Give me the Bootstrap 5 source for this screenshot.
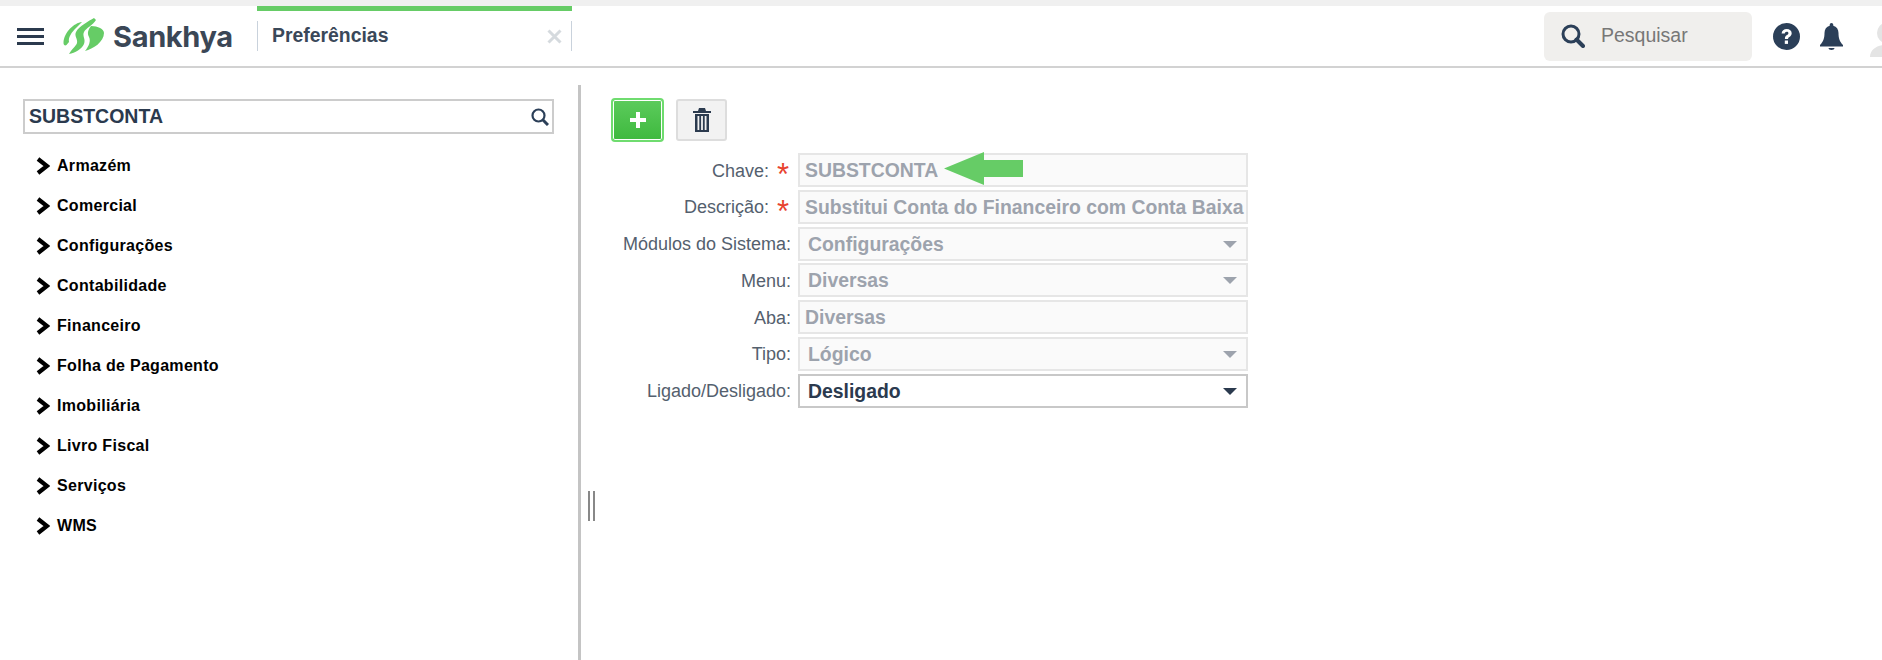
<!DOCTYPE html>
<html lang="pt-BR">
<head>
<meta charset="utf-8">
<title>Preferências</title>
<link href="https://cdn.jsdelivr.net/npm/bootstrap@5.3.0/dist/css/bootstrap.min.css" rel="stylesheet">
<style>
html,body{height:660px;overflow:hidden;background:#fff}
body{font-family:"Liberation Sans",Arial,sans-serif;color:#2b3a4e}
.top-strip{height:6px;background:#f0f0f0}
.app-head{height:62px;border-bottom:2px solid #d2d2d2;background:#fff}
.burger{width:27px;margin-left:17px;margin-right:19px}
.burger i{display:block;height:3px;background:#2b3a4e;margin-bottom:4px}
.burger i:last-child{margin-bottom:0}
.logo-mark{width:42px;height:36px;flex:none}
.logo-word{font-family:"Inter","Liberation Sans",sans-serif;font-size:29px;font-weight:700;color:#3b4756;letter-spacing:-.35px;margin-left:8px;width:144px;line-height:1;flex:none}
.tab-slot{width:315px;height:60px;border-top:5px solid #66cc66;padding:10px 0}
.tab-inner{height:30px;border-left:1px solid #c9d2dc;border-right:1px solid #c9d2dc;padding:0 9px 0 14px}
.tab-title{font-size:19.4px;font-weight:700;color:#3a4859}
.search-top{width:208px;height:49px;background:#f0efed;border-radius:6px;padding-left:17px;font-size:19.5px;color:#777}
.search-top span{margin-left:16px}
.avatar-box{width:12px;height:34px;overflow:hidden;margin-left:27px;align-self:flex-end;margin-bottom:9px}
.work{height:592px}
.side{width:578px;padding:31px 24px 0 23px;flex:none}
.tree-search{height:35px;border:2px solid #ccc;padding:0 3px 0 4px;font-size:19.5px;font-weight:700;margin-bottom:11px;line-height:33px}
.tree-row{height:40px;padding:1px 0 0 12px;color:#000;font-size:16px;font-weight:700;letter-spacing:.3px}
.tree-row svg{margin-right:7px;flex:none}
.divider{width:3px;background:#c4c4c4;margin-top:17px;flex:none}
.pane{padding:30px 0 0 30px;position:relative;flex:1}
.grip{width:7px;height:30px;border-left:2px solid #888;border-right:2px solid #888;position:absolute;left:7px;top:423px}
.btn-new{width:53px;height:44px;padding:0;border:2px solid #6fdc6f;border-radius:4px;background:linear-gradient(#5ccb5c,#3eb93e);box-shadow:inset 0 0 0 1px #fff}
.btn-new:hover{background:#3eb93e}
.btn-del{width:51px;height:42px;padding:0;border:2px solid #ddd;border-radius:3px;background:#f2f2f2;margin-left:12px}
.btn-del:hover{background:#f2f2f2;border-color:#ddd}
.tool-row{margin-bottom:11px}
.frm-row{height:34px;margin-bottom:2.8px}
.frm-lbl{width:187px;flex:none;text-align:right;font-size:18px;color:#54606e;padding:2px 7px 0 0}
.req{color:#e8432e;font-size:31px;font-weight:400;line-height:16px;width:22px;text-align:center;flex:none;margin-right:4px;padding-top:10px}
.frm-lbl.has-req{width:158px;padding-right:0;margin-right:3px}
.fld{width:450px;height:34px;border:2px solid #e6e6e6;background:#fafafa;color:#9da3ad;font-weight:700;font-size:19.4px;padding:1px 4px 0 5px;white-space:nowrap;overflow:hidden}
.fld.sel{padding:1px 9px 0 8px}
.fld.live{background:#fff;border-color:#c8c8c8;color:#2b3a4e}
.caret-d{width:0;height:0;border-left:7px solid transparent;border-right:7px solid transparent;border-top:7px solid #9da3ad;flex:none}
.fld.live .caret-d{border-top-color:#2b3a4e}
.pointer{position:absolute;left:363px;top:84px;width:79px;height:33px}
</style>
</head>
<body>
<div class="top-strip"></div>
<header class="app-head d-flex align-items-center">
  <div class="burger"><i></i><i></i><i></i></div>
  <svg class="logo-mark" viewBox="0 0 42 36" aria-hidden="true">
    <path fill="#66cc66" d="M19 4C11 5 1 14 .5 25c0 2 1.500 3 3 2L6 24c-1-5 3-10 7-14zM31 0c-5 3-15 8-18 14-2 4 2 7 1 11-1 3-5 6-8 11 6-1 13-5 15-10 2-5-2-8 0-12 2-4 9-7 12-12zM28 8c-3 4-4 7-2 11 2 4 0 9-4 14 8-2 19-9 19-18 0-4-6-7-13-7z"/>
  </svg>
  <div class="logo-word">Sankhya</div>
  <div class="tab-slot align-self-start">
    <div class="tab-inner d-flex align-items-center justify-content-between">
      <span class="tab-title">Preferências</span>
      <svg width="15" height="15" viewBox="0 0 15 15" aria-hidden="true"><path d="M1.500 1.500l12 12M13.500 1.500l-12 12" stroke="#d5dade" stroke-width="3"/></svg>
    </div>
  </div>
  <div class="search-top d-flex align-items-center ms-auto">
    <svg width="24" height="24" viewBox="0 0 24 24" aria-hidden="true"><circle cx="10" cy="10" r="8" fill="none" stroke="#2b3f58" stroke-width="3"/><path d="M15.500 15.500L22 22" stroke="#2b3f58" stroke-width="4" stroke-linecap="round"/></svg>
    <span>Pesquisar</span>
  </div>
  <svg width="27" height="27" viewBox="0 0 27 27" style="margin-left:21px" aria-hidden="true"><circle cx="13.500" cy="13.500" r="13.500" fill="#2b3f58"/><path d="M8.600 10.600c.2-3 2.300-4.600 5.100-4.600 2.900 0 5 1.700 5 4.200 0 2-1.200 3-2.400 3.800-.9.600-1.200 1-1.200 2h-3.200c0-2 .6-3 2-3.900 1-.7 1.500-1.100 1.500-1.900 0-.9-.7-1.400-1.700-1.400-1.100 0-1.800.7-1.900 1.800z" fill="#fff"/><rect x="11.800" y="17.500" width="3.200" height="3.400" fill="#fff"/></svg>
  <svg width="23" height="27" viewBox="0 0 23 27" style="margin-left:20px" aria-hidden="true"><path fill="#2b3f58" d="M11.500 0c1 0 1.800.8 1.800 1.900v.9c3.300.8 5.200 3.500 5.200 7.200 0 5 1 8.300 4.500 12v1.500H0V22c3.500-3.700 4.500-7 4.500-12 0-3.700 1.900-6.400 5.200-7.200v-.9C9.700.8 10.500 0 11.500 0zM8.500 25h6c0 1.300-1.300 2-3 2s-3-.7-3-2z"/></svg>
  <div class="avatar-box"><svg width="30" height="34" viewBox="0 0 30 34" aria-hidden="true"><ellipse cx="16" cy="10" rx="9" ry="10" fill="#e4e4e4"/><path d="M0 34c0-8 8-12 16-12s14 4 14 12z" fill="#e4e4e4"/></svg></div>
</header>
<main class="work d-flex">
  <aside class="side">
    <div class="tree-search d-flex align-items-center justify-content-between">
      <span>SUBSTCONTA</span>
      <svg width="18" height="18" viewBox="0 0 18 18" aria-hidden="true"><circle cx="7.500" cy="7.500" r="6" fill="none" stroke="#2b3f58" stroke-width="2.200"/><path d="M12 12l5 5" stroke="#2b3f58" stroke-width="3"/></svg>
    </div>
    <div class="tree-row d-flex align-items-center"><svg width="15" height="18" viewBox="0 0 15 18" aria-hidden="true"><path d="M3 2l9 7-9 7" fill="none" stroke="#000" stroke-width="4.200"/></svg>Armazém</div>
    <div class="tree-row d-flex align-items-center"><svg width="15" height="18" viewBox="0 0 15 18" aria-hidden="true"><path d="M3 2l9 7-9 7" fill="none" stroke="#000" stroke-width="4.200"/></svg>Comercial</div>
    <div class="tree-row d-flex align-items-center"><svg width="15" height="18" viewBox="0 0 15 18" aria-hidden="true"><path d="M3 2l9 7-9 7" fill="none" stroke="#000" stroke-width="4.200"/></svg>Configurações</div>
    <div class="tree-row d-flex align-items-center"><svg width="15" height="18" viewBox="0 0 15 18" aria-hidden="true"><path d="M3 2l9 7-9 7" fill="none" stroke="#000" stroke-width="4.200"/></svg>Contabilidade</div>
    <div class="tree-row d-flex align-items-center"><svg width="15" height="18" viewBox="0 0 15 18" aria-hidden="true"><path d="M3 2l9 7-9 7" fill="none" stroke="#000" stroke-width="4.200"/></svg>Financeiro</div>
    <div class="tree-row d-flex align-items-center"><svg width="15" height="18" viewBox="0 0 15 18" aria-hidden="true"><path d="M3 2l9 7-9 7" fill="none" stroke="#000" stroke-width="4.200"/></svg>Folha de Pagamento</div>
    <div class="tree-row d-flex align-items-center"><svg width="15" height="18" viewBox="0 0 15 18" aria-hidden="true"><path d="M3 2l9 7-9 7" fill="none" stroke="#000" stroke-width="4.200"/></svg>Imobiliária</div>
    <div class="tree-row d-flex align-items-center"><svg width="15" height="18" viewBox="0 0 15 18" aria-hidden="true"><path d="M3 2l9 7-9 7" fill="none" stroke="#000" stroke-width="4.200"/></svg>Livro Fiscal</div>
    <div class="tree-row d-flex align-items-center"><svg width="15" height="18" viewBox="0 0 15 18" aria-hidden="true"><path d="M3 2l9 7-9 7" fill="none" stroke="#000" stroke-width="4.200"/></svg>Serviços</div>
    <div class="tree-row d-flex align-items-center"><svg width="15" height="18" viewBox="0 0 15 18" aria-hidden="true"><path d="M3 2l9 7-9 7" fill="none" stroke="#000" stroke-width="4.200"/></svg>WMS</div>
  </aside>
  <div class="divider"></div>
  <section class="pane">
    <div class="grip"></div>
    <div class="tool-row d-flex align-items-center">
      <button type="button" class="btn btn-new d-flex align-items-center justify-content-center" aria-label="Adicionar"><svg width="18" height="18" viewBox="0 0 18 18" aria-hidden="true"><path d="M9 1v16M1 9h16" stroke="#fff" stroke-width="4"/></svg></button>
      <button type="button" class="btn btn-del d-flex align-items-center justify-content-center" aria-label="Excluir"><svg width="18" height="24" viewBox="0 0 18 24" aria-hidden="true"><path fill="#2b3a4e" fill-rule="evenodd" d="M6 0h6l1 3h5v2H0V3h5zM2 6h14v18H2zM4.500 8v14h1.800V8zM8.100 8v14h1.800V8zM11.700 8v14h1.800V8z"/></svg></button>
    </div>
    <div class="frm-row d-flex align-items-center"><div class="frm-lbl has-req">Chave:</div><div class="req">*</div><div class="fld d-flex align-items-center">SUBSTCONTA</div></div>
    <div class="frm-row d-flex align-items-center"><div class="frm-lbl has-req">Descrição:</div><div class="req">*</div><div class="fld d-flex align-items-center">Substitui Conta do Financeiro com Conta Baixa</div></div>
    <div class="frm-row d-flex align-items-center"><div class="frm-lbl">Módulos do Sistema:</div><div class="fld sel d-flex align-items-center justify-content-between">Configurações<i class="caret-d"></i></div></div>
    <div class="frm-row d-flex align-items-center"><div class="frm-lbl">Menu:</div><div class="fld sel d-flex align-items-center justify-content-between">Diversas<i class="caret-d"></i></div></div>
    <div class="frm-row d-flex align-items-center"><div class="frm-lbl">Aba:</div><div class="fld d-flex align-items-center">Diversas</div></div>
    <div class="frm-row d-flex align-items-center"><div class="frm-lbl">Tipo:</div><div class="fld sel d-flex align-items-center justify-content-between">Lógico<i class="caret-d"></i></div></div>
    <div class="frm-row d-flex align-items-center"><div class="frm-lbl">Ligado/Desligado:</div><div class="fld sel live d-flex align-items-center justify-content-between">Desligado<i class="caret-d"></i></div></div>
    <svg class="pointer" viewBox="0 0 79 33" aria-hidden="true"><path fill="#66cc66" d="M0 16.500L40 0v8h39v17H40v8z"/></svg>
  </section>
</main>
<script src="https://cdn.jsdelivr.net/npm/bootstrap@5.3.0/dist/js/bootstrap.bundle.min.js"></script>
</body>
</html>
